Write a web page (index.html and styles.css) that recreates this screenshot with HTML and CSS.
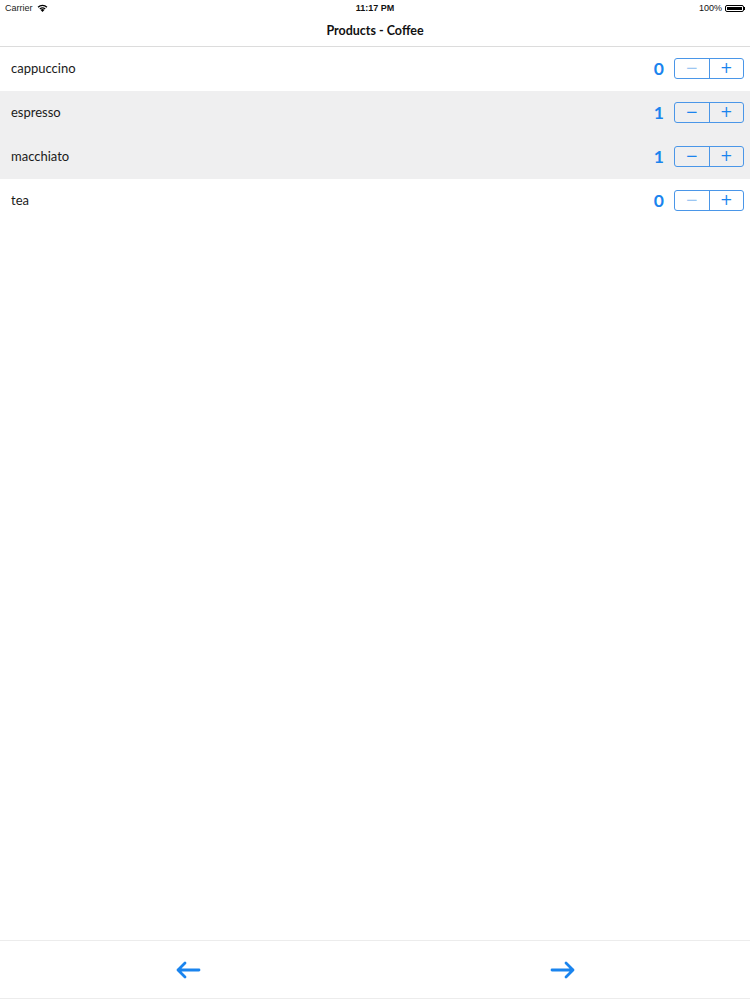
FILE: index.html
```html
<!DOCTYPE html>
<html>
<head>
<meta charset="utf-8">
<link rel="stylesheet" href="styles.css">
</head>
<body>
<div class="screen">
  <div class="status">
    <div class="status-left">Carrier
      <svg class="wifi" width="11" height="8" viewBox="0 0 11 8"><path d="M5.5 8 L3.6 5.9 A2.8 2.8 0 0 1 7.4 5.9 Z" fill="#000"/><path d="M2.4 4.6 A4.6 4.6 0 0 1 8.6 4.6 L7.8 5.4 A3.5 3.5 0 0 0 3.2 5.4 Z" fill="#000"/><path d="M0.6 2.8 A7 7 0 0 1 10.4 2.8 L9.5 3.7 A5.8 5.8 0 0 0 1.5 3.7 Z" fill="#000"/></svg>
    </div>
    <div class="status-time">11:17 PM</div>
    <div class="status-right">100%
      <span class="battery"><span class="battery-fill"></span></span><span class="battery-tip"></span>
    </div>
  </div>
  <div class="navbar">Products - Coffee</div>
  <div class="list">
    <div class="row">
      <span class="name">cappuccino</span>
      <span class="count">0</span>
      <div class="stepper"><span class="btn minus disabled">−</span><span class="btn plus">+</span></div>
    </div>
    <div class="row selected">
      <span class="name">espresso</span>
      <span class="count">1</span>
      <div class="stepper"><span class="btn minus">−</span><span class="btn plus">+</span></div>
    </div>
    <div class="row selected">
      <span class="name">macchiato</span>
      <span class="count">1</span>
      <div class="stepper"><span class="btn minus">−</span><span class="btn plus">+</span></div>
    </div>
    <div class="row">
      <span class="name">tea</span>
      <span class="count">0</span>
      <div class="stepper"><span class="btn minus disabled">−</span><span class="btn plus">+</span></div>
    </div>
  </div>
  <div class="spacer"></div>
  <div class="toolbar">
    <svg class="arrow" width="26" height="18" viewBox="0 0 26 18"><path d="M24 9 H3 M10 2 L3 9 L10 16" fill="none" stroke="#1a84ee" stroke-width="2.8" stroke-linecap="round" stroke-linejoin="round"/></svg>
    <svg class="arrow" width="26" height="18" viewBox="0 0 26 18"><path d="M2 9 H23 M16 2 L23 9 L16 16" fill="none" stroke="#1a84ee" stroke-width="2.8" stroke-linecap="round" stroke-linejoin="round"/></svg>
  </div>
</div>
</body>
</html>
```
FILE: styles.css
```css
html, body {
  margin: 0;
  padding: 0;
  background: #fff;
}
.screen {
  width: 750px;
  height: 1000px;
  display: flex;
  flex-direction: column;
  font-family: "Lato", "Noto Sans", sans-serif;
  color: #111;
}
.status {
  height: 16px;
  display: flex;
  align-items: center;
  justify-content: space-between;
  padding: 0 5px;
  font-family: "Liberation Sans", sans-serif;
  font-size: 9px;
  position: relative;
}
.status-left {
  display: flex;
  align-items: center;
  gap: 4px;
  color: #222;
}
.status-time {
  position: absolute;
  left: 0;
  right: 0;
  text-align: center;
  font-weight: bold;
  top: 3px;
}
.status-right {
  display: flex;
  align-items: center;
  gap: 3px;
}
.battery {
  width: 19px;
  height: 7px;
  border: 1px solid #000;
  border-radius: 2px;
  padding: 1px;
  box-sizing: border-box;
  display: flex;
}
.battery-fill {
  flex: 1;
  background: #000;
}
.battery-tip {
  width: 1px;
  height: 3px;
  background: #000;
  margin-left: -3px;
}
.navbar {
  height: 31px;
  border-bottom: 1px solid #dcdcdc;
  display: flex;
  align-items: center;
  justify-content: center;
  font-size: 12.5px;
  font-weight: bold;
  box-sizing: border-box;
  padding-bottom: 1px;
}
.list {
  display: flex;
  flex-direction: column;
}
.row {
  height: 44px;
  display: flex;
  align-items: center;
  padding: 0 6px 2px 11px;
  box-sizing: border-box;
}
.row.selected {
  background: #efeff0;
}
.name {
  flex: 1;
  font-size: 13px;
  color: #1a1a1a;
}
.count {
  font-size: 17.5px;
  font-weight: bold;
  color: #1a84ee;
  margin-right: 10px;
}
.stepper {
  display: flex;
  width: 70px;
  height: 21px;
  border: 1px solid #4a96e8;
  border-radius: 3px;
  box-sizing: border-box;
}
.btn {
  flex: 1;
  display: flex;
  align-items: center;
  justify-content: center;
  color: #1a84ee;
  font-family: "DejaVu Sans", sans-serif;
  font-size: 15px;
  line-height: 1;
}
.btn.minus {
  border-right: 1px solid #4a96e8;
}
.btn.disabled {
  color: #9cc6f2;
}
.spacer {
  flex: 1;
}
.toolbar {
  height: 57px;
  border-top: 1px solid #ececec;
  border-bottom: 1px solid #ececec;
  display: flex;
  align-items: center;
  justify-content: space-around;
  margin-bottom: 1px;
}
.arrow {
  display: block;
}
```
